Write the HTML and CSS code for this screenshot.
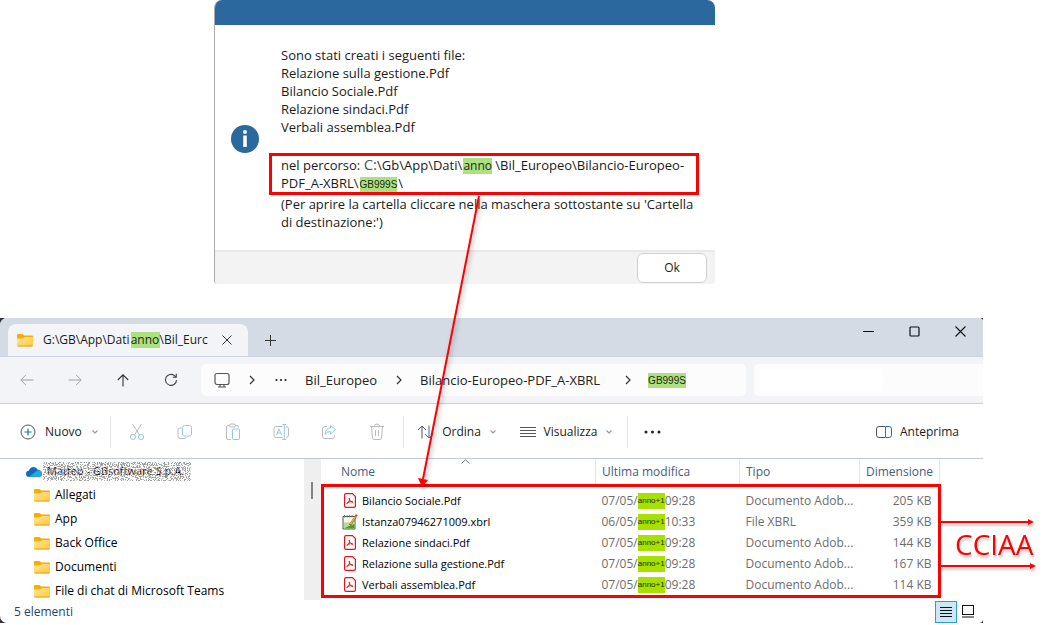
FILE: index.html
```html
<!DOCTYPE html>
<html lang="it">
<head>
<meta charset="utf-8">
<title>File creati</title>
<link rel="stylesheet" href="styles.css">
</head>
<body>
<svg class="sprites" aria-hidden="true">
  <defs>
    <linearGradient id="folderFill" x1="0" y1="0" x2="1" y2="1">
      <stop offset="0" stop-color="#ffe597"/><stop offset="1" stop-color="#ffc83a"/>
    </linearGradient>
    <symbol id="folder" viewBox="0 0 16 14">
      <path d="M0 2Q0 1 1 1H5.500L7.500 2.500H15Q16 2.500 16 3.500V8H0Z" fill="#f2ae0e"/>
      <path d="M0 5.500H6L8 4H15Q16 4 16 5V12.500Q16 13.500 15 13.500H1Q0 13.500 0 12.500Z" fill="url(#folderFill)"/>
      <path d="M0.500 13H15.500" stroke="#e9a516"/>
    </symbol>
    <symbol id="pdf" viewBox="0 0 12 15">
      <path d="M2 .6H8.500L11.400 3.500V13Q11.400 14.400 10 14.400H2Q.6 14.400 .6 13V2Q.6 .6 2 .6Z" fill="#fff" stroke="#e5141c" stroke-width="1.200"/>
      <path d="M3.200 10.500C4.800 9.300 6 7 5.500 5.200C5 4.300 4.900 6.200 6.100 7.700C7.200 9 9.200 9.900 9 9.100C8.700 8.300 5 8.700 3.500 9.500C2.500 10.200 2.700 10.900 3.200 10.500" fill="none" stroke="#e5141c"/>
    </symbol>
    <symbol id="xbrl" viewBox="0 0 16 16">
      <path d="M1 2.500H13V15H1Z" fill="#f4f7ee" stroke="#555"/>
      <path d="M2 8.500H12.500V14.500H2Z" fill="#b4dc8c"/>
      <path d="M2 14.500L7 12L12.500 10V14.500Z" fill="#4b9a35"/>
      <path d="M2.500 1V3.500M5 1V3.500M7.500 1V3.500M10 1V3.500" stroke="#777"/>
      <path d="M8 11L13.800 2.500" stroke="#6b4a16" stroke-width="2.200"/>
      <path d="M8.300 10.300L13.500 2.600" stroke="#f4bc28" stroke-width="1.500"/>
      <path d="M13.600 2.500L14.800 .6" stroke="#dc4b2d" stroke-width="2.200"/>
    </symbol>
    <symbol id="down" viewBox="0 0 8 8"><path d="M1.500 2.500L4 5L6.500 2.500" fill="none" stroke="#999" stroke-width="1.100"/></symbol>
    <symbol id="right" viewBox="0 0 8 10"><path d="M2 1L6 5L2 9" fill="none" stroke="#333" stroke-width="1.200"/></symbol>
  </defs>
</svg>

<main class="page">
  <section class="dialog" role="dialog" aria-label="Informazione">
    <div class="dialog-title"></div>
    <div class="dialog-body">
      <svg class="info" viewBox="0 0 28 28" role="img" aria-label="Informazione">
        <circle cx="14" cy="14" r="14" fill="#2a689e"/>
        <circle cx="14" cy="7" r="2" fill="#fff"/>
        <path d="M14 10.500V22" stroke="#fff" stroke-width="3.600"/>
      </svg>
      <div class="message">
        <p>Sono stati creati i seguenti file:<br>Relazione sulla gestione.Pdf<br>Bilancio Sociale.Pdf<br>Relazione sindaci.Pdf<br>Verbali assemblea.Pdf</p>
        <p class="path">nel percorso: <span class="drive">C:</span>\Gb\App\Dati\<mark>anno</mark>\Bil_Europeo\Bilancio-Europeo-<br>PDF_A-XBRL\<mark class="code">GB999S</mark>\</p>
        <p>(Per aprire la cartella cliccare nella maschera sottostante su 'Cartella<br>di destinazione:')</p>
      </div>
    </div>
    <div class="dialog-foot"><button class="ok">Ok</button></div>
  </section>

  <div class="desktop">
  <section class="explorer">
    <header class="tabs">
      <div class="tab">
        <svg class="folder"><use href="#folder"/></svg>
        <span class="tab-text">G:\GB\App\Dati<mark>anno</mark>\Bil_Eurc</span>
        <button class="tab-close" aria-label="Chiudi scheda"><svg width="10" height="10"><path d="M.5 .5L9.500 9.500M9.500 .5L.5 9.500" stroke="#333"/></svg></button>
      </div>
      <button class="new-tab" aria-label="Nuova scheda"><svg width="11" height="11"><path d="M0 5.500H11M5.500 0V11" stroke="#333"/></svg></button>
      <div class="win-buttons">
        <button aria-label="Riduci"><svg width="11" height="11"><path d="M0 5.500H11" stroke="#111"/></svg></button>
        <button aria-label="Ingrandisci"><svg width="11" height="11"><rect x="1" y="1" width="9" height="9" rx="1" fill="none" stroke="#111" stroke-width="1.200"/></svg></button>
        <button aria-label="Chiudi"><svg width="11" height="11"><path d="M.5 .5L10.500 10.500M10.500 .5L.5 10.500" stroke="#111" stroke-width="1.100"/></svg></button>
      </div>
    </header>

    <nav class="nav">
      <div class="nav-buttons">
        <button aria-label="Indietro"><svg width="14" height="12" fill="none" stroke="#9ea1a5"><path d="M13.500 6H1M6 .8L.8 6L6 11.200"/></svg></button>
        <button aria-label="Avanti"><svg width="14" height="12" fill="none" stroke="#9ea1a5"><path d="M.5 6H13M8 .8L13.200 6L8 11.200"/></svg></button>
        <button aria-label="Su"><svg width="12" height="13" fill="none" stroke="#333" stroke-width="1.100"><path d="M6 12.500V1M.8 6L6 .8L11.200 6"/></svg></button>
        <button aria-label="Aggiorna"><svg width="14" height="14" fill="none" stroke="#444" stroke-width="1.100"><path d="M12.500 7A5.500 5.500 0 1 1 10.500 2.600L12 4M12.300 .8V4.200H8.800"/></svg></button>
      </div>
      <div class="address">
        <svg width="16" height="16" fill="none" stroke="#555" stroke-width="1.200"><rect x="1" y="1.500" width="14" height="11" rx="2"/><path d="M6 12.500V15M10 12.500V15M4 15H12"/></svg>
        <svg class="sep"><use href="#right"/></svg>
        <svg class="more" width="12" height="4" fill="#222"><circle cx="1.500" cy="2" r="1.100"/><circle cx="6" cy="2" r="1.100"/><circle cx="10.500" cy="2" r="1.100"/></svg>
        <a class="crumb" href="#">Bil_Europeo</a>
        <svg class="sep"><use href="#right"/></svg>
        <a class="crumb" href="#">Bilancio-Europeo-PDF_A-XBRL</a>
        <svg class="sep last"><use href="#right"/></svg>
        <mark class="code">GB999S</mark>
      </div>
      <div class="search"><input aria-label="Cerca"></div>
    </nav>

    <div class="toolbar">
      <button class="new"><svg width="16" height="16" fill="none"><circle cx="8" cy="8" r="7" stroke="#555"/><path d="M4.500 8H11.500M8 4.500V11.500" stroke="#1775c8" stroke-width="1.200"/></svg>Nuovo<svg class="down"><use href="#down"/></svg></button>
      <div class="tools">
        <button aria-label="Taglia"><svg width="16" height="18" fill="none" stroke="#b9bbbd"><path d="M3.500 1L10.500 12M12.500 1L5.500 12"/><g stroke="#90c8ef"><circle cx="4" cy="14" r="2.600"/><circle cx="12" cy="14" r="2.600"/></g></svg></button>
        <button aria-label="Copia"><svg width="16" height="16" fill="none" stroke="#b9bbbd"><path d="M4.500 4H3Q1 4 1 6V12.500Q1 14.500 3 14.500H7Q9 14.500 9.300 13"/><rect x="5.500" y="1.500" width="9" height="10.500" rx="2" stroke="#90c8ef"/></svg></button>
        <button aria-label="Incolla"><svg width="16" height="18" fill="none" stroke="#b9bbbd"><path d="M6 16.500H3Q1.500 16.500 1.500 15V4Q1.500 2.500 3 2.500H4.500M10 2.500H12Q13.500 2.500 13.500 4.500"/><rect x="4.500" y="1" width="6" height="3" rx="1.500"/><rect x="7.500" y="6" width="7" height="10.500" rx="1" stroke="#90c8ef"/></svg></button>
        <button aria-label="Rinomina"><svg width="16" height="16" fill="none" stroke="#b9bbbd"><path d="M9.500 2.500H3Q1 2.500 1 4.500V11.500Q1 13.500 3 13.500H9.500M13 2.500Q15.500 2.500 15.500 5V11Q15.500 13.500 13 13.500"/><path d="M3.500 11L6 4.800L8.500 11M4.500 9H7.500M11.300 1V15M9.300 .5H13.300M9.300 15.500H13.300" stroke="#90c8ef"/></svg></button>
        <button aria-label="Condividi"><svg width="16" height="16" fill="none" stroke="#b9bbbd"><path d="M6 2.500H4Q1.500 2.500 1.500 5V12Q1.500 14.500 4 14.500H11Q13.500 14.500 13.500 12V11"/><path d="M9.500 1.500L14.500 5.700L9.500 10V7.500Q6 7.300 4 10.500Q4.500 4.500 9.500 4Z" stroke="#90c8ef"/></svg></button>
        <button aria-label="Elimina"><svg width="16" height="18" fill="none" stroke="#b9bbbd"><path d="M1 3.500H15M2.500 3.500L3.500 15Q3.700 16.500 5 16.500H11Q12.300 16.500 12.500 15L13.500 3.500M5.500 3.500Q5.500 1 8 1Q10.500 1 10.500 3.500M6.500 7V13M9.500 7V13"/></svg></button>
      </div>
      <button class="sort"><svg width="17" height="14" fill="none"><path d="M5 13.500V1M1 5L5 1L9 5" stroke="#555"/><path d="M12 .5V13M8 9L12 13L16 9" stroke="#1775c8"/></svg>Ordina<svg class="down"><use href="#down"/></svg></button>
      <button class="view"><svg width="16" height="12"><path d="M0 1.500H16M0 4.500H16M0 7.500H16M0 10.500H16" stroke="#555"/></svg>Visualizza<svg class="down"><use href="#down"/></svg></button>
      <button class="dots" aria-label="Altro"><svg width="17" height="4" fill="#222"><circle cx="2" cy="2" r="1.500"/><circle cx="8.500" cy="2" r="1.500"/><circle cx="15" cy="2" r="1.500"/></svg></button>
      <button class="preview"><svg width="16" height="12" fill="none"><path d="M9.500 .5H3Q.5 .5 .5 3V9Q.5 11.500 3 11.500H9.500" stroke="#555"/><path d="M9.500 .5H13Q15.500 .5 15.500 3V9Q15.500 11.500 13 11.500H9.500Z" stroke="#1775c8"/></svg>Anteprima</button>
    </div>

    <div class="content">
      <aside class="tree">
        <div class="account">
          <svg width="16" height="11"><path d="M3.500 11Q0 11 0 7.800Q0 5 3 4.500Q4 1 7.500 1Q10.500 1 11.800 3.800Q16 4.200 16 7.500Q16 11 12.500 11Z" fill="#0f6cbd"/><path d="M3 10.800L11.500 4.500Q16 4.500 16 7.500Q16 11 12.500 11Z" fill="#2aa5ea"/></svg>
          <span class="account-name">Matteo - GBsoftware S.p.A.
            <svg class="grain" aria-hidden="true"><filter id="noise" x="0" y="0" width="100%" height="100%"><feTurbulence type="fractalNoise" baseFrequency="0.9" numOctaves="2" seed="4"/><feColorMatrix values="0 0 0 0 0.350  0 0 0 0 0.350  0 0 0 0 0.350  16 0 0 0 -8"/></filter><rect width="100%" height="100%" filter="url(#noise)"/></svg>
          </span>
        </div>
        <ul>
          <li><svg class="folder"><use href="#folder"/></svg>Allegati</li>
          <li><svg class="folder"><use href="#folder"/></svg>App</li>
          <li><svg class="folder"><use href="#folder"/></svg>Back Office</li>
          <li><svg class="folder"><use href="#folder"/></svg>Documenti</li>
          <li><svg class="folder"><use href="#folder"/></svg>File di chat di Microsoft Teams</li>
        </ul>
      </aside>
      <div class="scroll"><div class="thumb"></div></div>
      <div class="files">
        <svg class="sorted" width="9" height="5"><path d="M.5 4.500L4.500 .8L8.500 4.500" fill="none" stroke="#777"/></svg>
        <table>
          <thead><tr><th class="c-name">Nome</th><th class="c-date">Ultima modifica</th><th class="c-type">Tipo</th><th class="c-size">Dimensione</th></tr></thead>
          <tbody>
            <tr class="first"><td><span class="file"><svg class="pdf"><use href="#pdf"/></svg>Bilancio Sociale.Pdf</span></td><td><span class="date">07/05/<mark class="year">anno+1</mark>09:28</span></td><td>Documento Adob...</td><td>205 KB</td></tr>
            <tr><td><span class="file"><svg class="xbrl"><use href="#xbrl"/></svg>Istanza07946271009.xbrl</span></td><td><span class="date">06/05/<mark class="year">anno+1</mark>10:33</span></td><td>File XBRL</td><td>359 KB</td></tr>
            <tr><td><span class="file"><svg class="pdf"><use href="#pdf"/></svg>Relazione sindaci.Pdf</span></td><td><span class="date">07/05/<mark class="year">anno+1</mark>09:28</span></td><td>Documento Adob...</td><td>144 KB</td></tr>
            <tr><td><span class="file"><svg class="pdf"><use href="#pdf"/></svg>Relazione sulla gestione.Pdf</span></td><td><span class="date">07/05/<mark class="year">anno+1</mark>09:28</span></td><td>Documento Adob...</td><td>167 KB</td></tr>
            <tr><td><span class="file"><svg class="pdf"><use href="#pdf"/></svg>Verbali assemblea.Pdf</span></td><td><span class="date">07/05/<mark class="year">anno+1</mark>09:28</span></td><td>Documento Adob...</td><td>114 KB</td></tr>
          </tbody>
        </table>
        <div class="frame"></div>
        <div class="target">
          <svg width="96" height="8"><path d="M0 4H90" stroke="#f00" stroke-width="2"/><path d="M88 1L94 4L88 7Z" fill="#f00"/></svg>
          <span>CCIAA</span>
          <svg width="98" height="8"><path d="M0 4H92" stroke="#f00" stroke-width="2"/><path d="M90 1L96 4L90 7Z" fill="#f00"/></svg>
        </div>
      </div>
    </div>

    <footer class="status">
      <span class="count">5 elementi</span>
      <button class="mode on" aria-label="Dettagli"><svg width="12" height="12"><path d="M0 1.500H12M0 4.500H12M0 7.500H12M0 10.500H12" stroke="#111"/></svg></button>
      <button class="mode" aria-label="Icone grandi"><svg width="12" height="13" fill="none"><rect x=".5" y=".5" width="11" height="9" stroke="#111"/><path d="M0 12H12" stroke="#111"/></svg></button>
    </footer>
  </section>
  </div>

  <svg class="pointer" width="80" height="300" viewBox="0 0 80 300" aria-hidden="true">
    <path d="M69 4L13 287" stroke="#f00" stroke-width="2"/>
    <path d="M8 286L18 288L12 295Z" fill="#f00"/>
  </svg>
</main>
</body>
</html>
```
FILE: styles.css
```css
* { box-sizing: border-box; }
body { margin: 0; background: #fff; color: #1b1b1b; font-family: "Open Sans", "Noto Sans", sans-serif; font-size: 12px; line-height: 18px; }
p, ul { margin: 0; padding: 0; }
button { border: 0; padding: 0; background: none; color: inherit; font: inherit; display: flex; align-items: center; justify-content: center; }
svg { display: block; flex: none; }
.sprites { position: absolute; width: 0; height: 0; }
.page { position: relative; min-height: 625px; }
mark { display: inline-block; background: #ade080; color: #1b2b10; text-align: center; }

.dialog { margin: 0 327px 0 214px; border-left: 1px solid #aaa; border-radius: 8px 8px 4px 4px; overflow: hidden; }
.dialog-title { height: 25px; background: #2a689e; }
.dialog-body { display: flex; align-items: center; gap: 10px; padding: 21px 16px 19px; }
.info { width: 28px; height: 28px; }
.message { flex: 1; min-width: 0; font-size: 13px; white-space: nowrap; padding-left: 12px; }
.message .path { margin: 17px 0 0 -12px; border: 3px solid #f00; padding-left: 9px; }
.path mark { width: 29px; height: 16px; margin: 0 3px 0 1px; line-height: 15px; font-size: 12px; }
.drive { color: #555; font-size: 15px; line-height: 16px; }
mark.code { width: auto; height: 15px; margin: 0; font-family: "Liberation Sans", sans-serif; font-size: 10px; line-height: 15px; }
.path mark.code { width: auto; margin: 0 1px; font-size: 10px; }
.dialog-foot { display: flex; justify-content: flex-end; padding: 1px 8px 1px; background: #f3f3f3; border-top: 2px solid #e9e9e9; }
.ok { width: 70px; height: 30px; border: 1px solid #d0d0d0; border-radius: 6px; background: #fff; }

.desktop { margin: 34px 59px 0 0; background: #333; }
.explorer { background: #fff; border-radius: 7px 4px 4px 7px; }
.tabs { display: flex; height: 39px; background: #d5dbe5; border-bottom: 1px solid #c9d2e0; border-radius: 7px 4px 0 0; padding-left: 8px; }
.tab { display: flex; align-items: center; width: 240px; margin-top: 6px; padding: 0 16px 0 9px; background: #f3f4f8; border-radius: 8px 8px 0 0; }
.folder { width: 16px; height: 14px; }
.tab-text { flex: 1; margin-left: 10px; white-space: nowrap; overflow: hidden; display: flex; align-items: center; font-weight: 500; }
.tab-text mark { width: 29px; height: 16px; margin: 0 0 0 1px; line-height: 15px; }
.new-tab { width: 45px; margin-top: 6px; }
.win-buttons { display: flex; margin-left: auto; height: 26px; }
.win-buttons button { width: 46px; }

.nav { display: flex; align-items: center; height: 47px; background: #f3f4f7; border-bottom: 1px solid #ccd0d6; }
.nav-buttons { display: flex; padding-left: 3px; width: 201px; }
.nav-buttons button { width: 48px; height: 32px; }
.address { display: flex; align-items: center; flex: 1; height: 32px; padding-left: 13px; background: #fcfcfd; border-radius: 5px; font-size: 13px; white-space: nowrap; }
.sep { width: 8px; height: 10px; margin: 0 17px 0 18px; }
.sep.last { margin: 0 16px 0 24px; }
.crumb { color: #222; text-decoration: none; }
.more { margin: 0 18px 0 2px; }
.search { width: 229px; margin-left: 8px; padding: 5px 6px; height: 32px; background: #fcfcfd; border-radius: 5px 0 0 5px; }
.search input { width: 123px; height: 22px; border: 0; background: #fff; display: block; }

.toolbar { display: flex; align-items: center; height: 55px; border-bottom: 1px solid #c3c9d4; padding: 1px 24px 0 20px; }
.down { width: 8px; height: 8px; }
.new { gap: 9px; width: 90px; height: 32px; justify-content: flex-start; padding-right: 16px; }
.new .down, .sort .down, .view .down { margin-left: auto; }
.tools { display: flex; border: solid #e6e6e6; border-width: 0 1px; height: 32px; padding: 0 2px; }
.tools button { width: 48px; }
.sort { gap: 8px; width: 74px; margin-left: 16px; }
.view { gap: 8px; width: 89px; margin-left: 28px; }
.dots { width: 49px; height: 32px; margin-left: 16px; border-left: 1px solid #e6e6e6; }
.preview { gap: 8px; margin-left: auto; }

.content { display: flex; height: 141px; }
.tree { width: 304px; color: #000; }
.account { display: flex; align-items: center; gap: 1px; height: 24px; padding-left: 26px; }
.account-name { position: relative; height: 19px; padding: 0 7px 0 4px; white-space: nowrap; font-size: 11px; }
.grain { position: absolute; inset: 0; width: 100%; height: 100%; }
.tree ul { list-style: none; }
.tree li { display: flex; align-items: center; gap: 5px; height: 24px; padding-left: 34px; white-space: nowrap; }
.scroll { width: 17px; background: #efefef; padding: 23px 0 0 7px; }
.thumb { width: 2px; height: 17px; background: #858585; }
.files { position: relative; flex: 1; padding-right: 43px; }
.sorted { position: absolute; left: 140px; top: 0; }
table { width: 100%; border-collapse: collapse; table-layout: fixed; }
th { height: 25px; padding: 0 0 0 6px; text-align: left; font-weight: 400; color: #44607c; border-right: 1px solid #e3e5e8; }
.c-name { padding-left: 20px; }
.c-date { width: 144px; }
.c-type { width: 120px; }
.c-size { width: 80px; }
td { height: 21px; padding: 0 0 0 6px; color: #6d6d6d; white-space: nowrap; }
.first td { height: 27px; padding-top: 6px; }
td:first-child { padding-left: 21px; color: #000; font-size: 11px; }
td:last-child { padding: 0 8px 0 0; text-align: right; }
.first td:last-child { padding-top: 6px; }
.file, .date { display: flex; align-items: center; }
.file { gap: 5px; }
.pdf { width: 12px; height: 15px; margin: 0 1px 0 2px; }
.xbrl { width: 16px; height: 16px; margin-right: -1px; }
mark.year { height: 16px; background: #a8e000; font-family: "Liberation Sans", sans-serif; font-size: 8px; line-height: 16px; }
.frame { position: absolute; left: 0; right: 42px; top: 25px; height: 114px; border: 3px solid #f00; }
.target { position: absolute; left: 619px; top: 59px; color: #f00; font-size: 28px; line-height: 36px; filter: drop-shadow(1px 3px 1px #0003); }
.target span { display: block; padding-left: 15px; }

.status { display: flex; align-items: center; height: 23px; padding: 0 4px 0 14px; color: #1f4768; }
.count { margin-right: auto; }
.mode { width: 22px; height: 22px; }
.mode.on { background: #cce8f7; border: 1px solid #2f9bd8; }
.pointer { position: absolute; left: 410px; top: 192px; filter: drop-shadow(2px 2px 2px #0004); }
```
